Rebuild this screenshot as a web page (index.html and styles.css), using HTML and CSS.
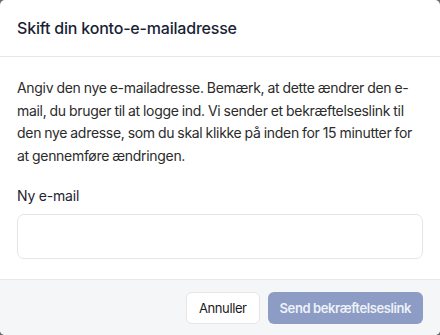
FILE: index.html
```html
<!DOCTYPE html>
<html lang="da">
<head>
<meta charset="utf-8">
<link rel="stylesheet" href="styles.css">
</head>
<body>
<div class="dialog">
  <div class="header"><h2 class="title">Skift din konto-e-mailadresse</h2></div>
  <div class="body">
    <p class="desc">Angiv den nye e-mailadresse. Bemærk, at dette ændrer den e-<wbr>mail, du bruger til at logge ind. Vi sender et bekræftelseslink til den nye adresse, som du skal klikke på inden for 15 minutter for at gennemføre ændringen.</p>
    <label class="label" for="email">Ny e-mail</label>
    <input class="input" id="email" type="email">
  </div>
  <div class="footer">
    <button class="btn btn-cancel">Annuller</button>
    <button class="btn btn-primary">Send bekræftelseslink</button>
  </div>
</div>
</body>
</html>
```
FILE: styles.css
```css
html, body { margin: 0; padding: 0; }
body {
  background: #6b6b6b;
  width: 440px;
  height: 335px;
  overflow: hidden;
  font-family: Inter, "Liberation Sans", sans-serif;
}
.dialog {
  width: 440px;
  height: 335px;
  background: #fff;
  border-radius: 5px;
  overflow: hidden;
  display: flex;
  flex-direction: column;
}
.header {
  height: 57px;
  box-sizing: border-box;
  border-bottom: 1px solid #e6e6e6;
  padding: 0 17px;
  display: flex;
  align-items: center;
}
.title {
  margin: 0;
  font-size: 16px;
  font-weight: 500;
  color: #1a1f36;
  letter-spacing: -0.2px;
}
.body {
  padding: 20px 17px 20px;
  flex: 1;
  display: flex;
  flex-direction: column;
}
.desc {
  margin: 0 0 20px;
  font-size: 14px;
  line-height: 22.5px;
  color: #2b2b2b;
  letter-spacing: -0.3px;
  word-spacing: -0.5px;
}
.label {
  font-size: 14px;
  color: #1f2330;
  margin-bottom: 9px;
  line-height: 18px;
  letter-spacing: -0.2px;
}
.input {
  box-sizing: border-box;
  width: 100%;
  height: 45px;
  border: 1px solid #e5e5e5;
  border-radius: 7px;
  background: #fff;
  outline: none;
}
.footer {
  height: 56px;
  box-sizing: border-box;
  background: #f5f6f8;
  border-top: 1px solid #e8e8e8;
  padding: 0 17px;
  display: flex;
  justify-content: flex-end;
  align-items: center;
  gap: 8px;
}
.btn {
  height: 32px;
  border-radius: 6px;
  font-family: inherit;
  font-size: 13px;
  letter-spacing: -0.4px;
  padding: 0 12px;
  cursor: pointer;
}
.btn-cancel {
  background: #fff;
  border: 1px solid #e6e6e6;
  color: #1a1a1a;
}
.btn-primary {
  background: #8c9cc5;
  border: none;
  color: #eef1f8;
  font-weight: 600;
  padding: 0 12px;
}
```
